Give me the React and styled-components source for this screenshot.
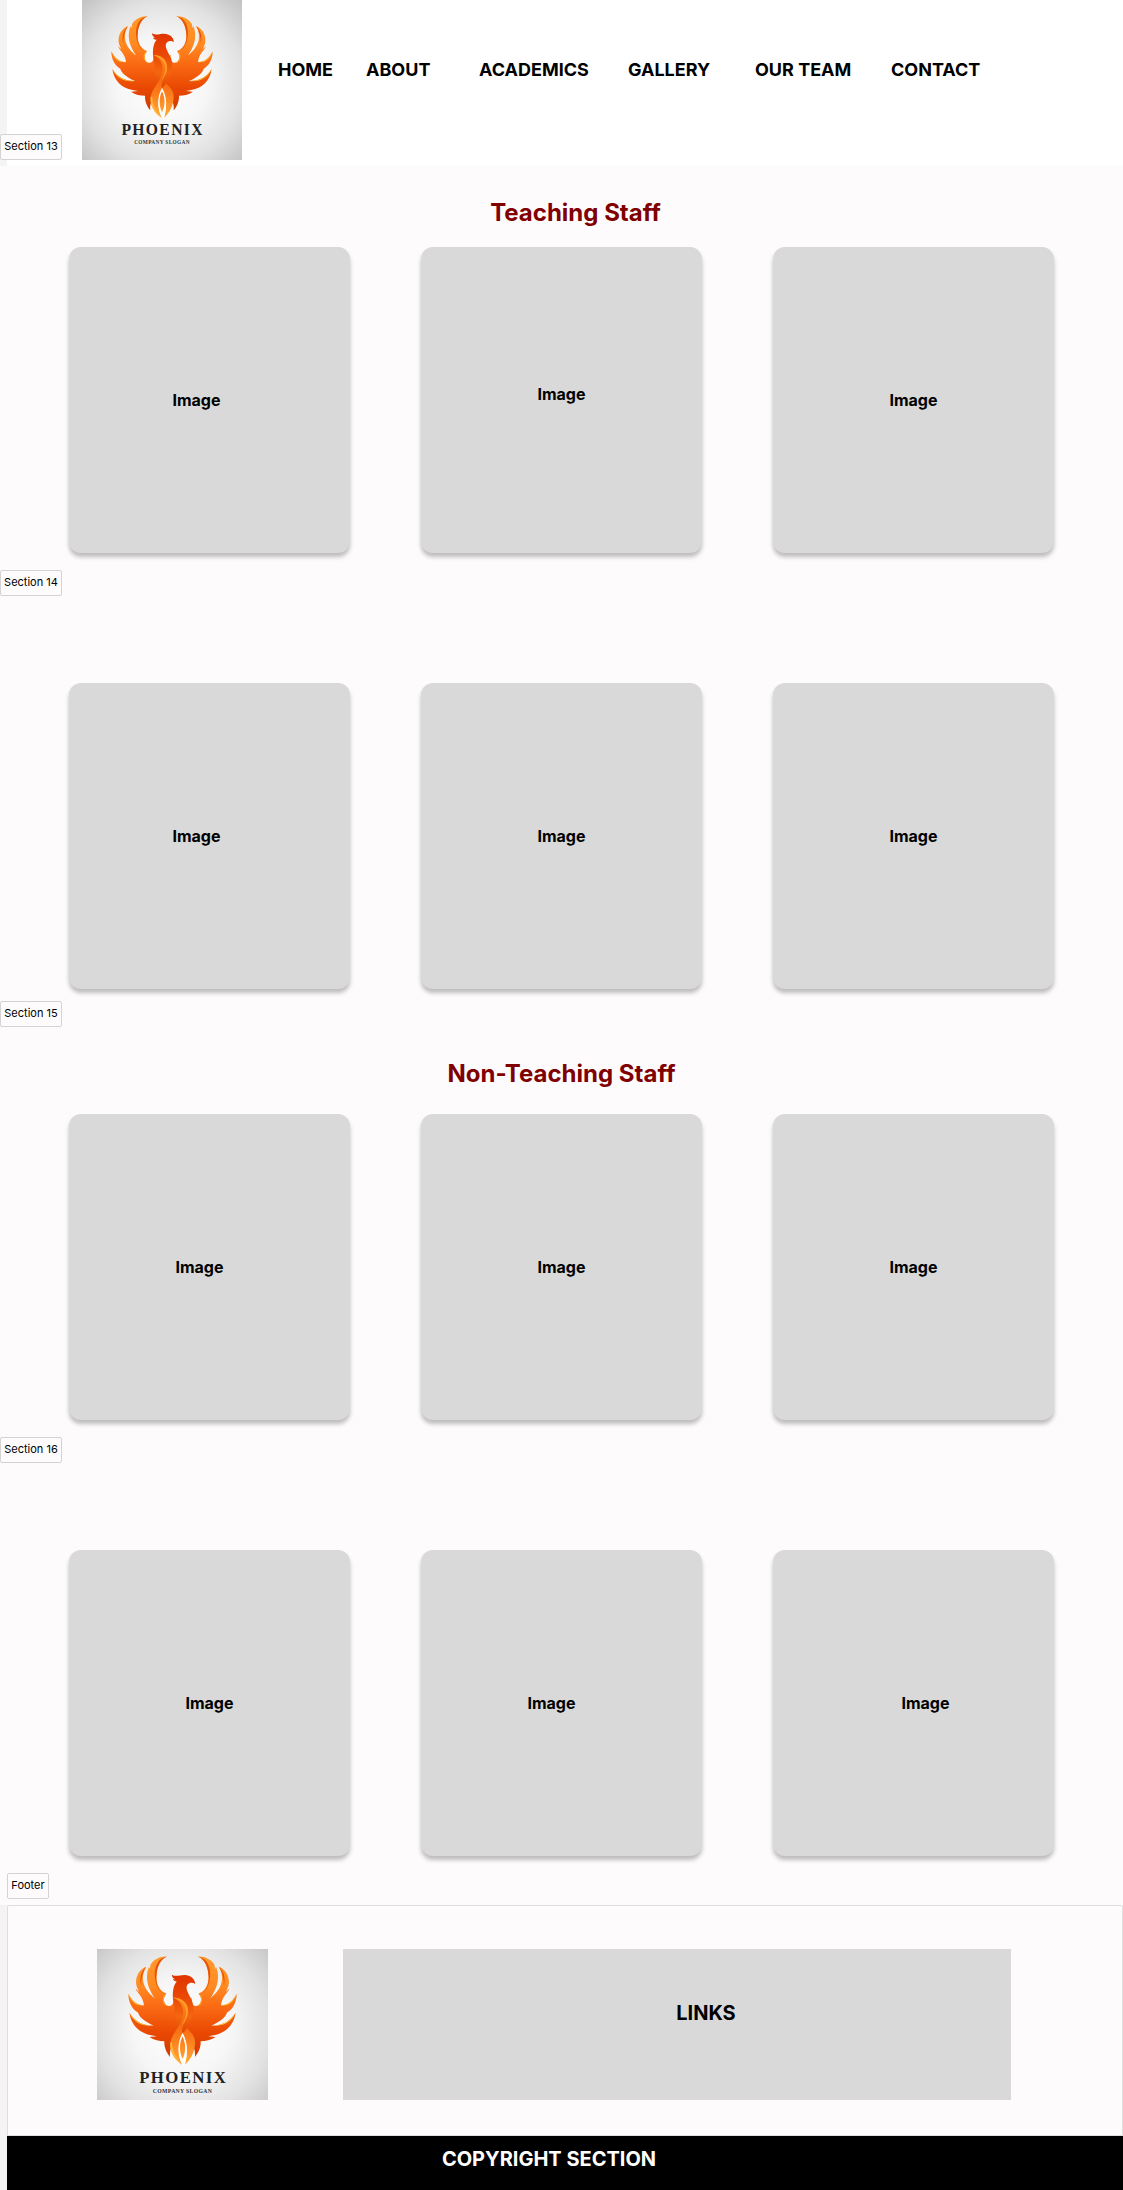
import React from "react";
import styled, { createGlobalStyle } from "styled-components";

const GlobalStyle = createGlobalStyle`
  *, *::before, *::after { box-sizing: border-box; }
  body {
    margin: 0;
    background: #f4f4f4;
    color: #000;
    font-family: Inter, "Liberation Sans", sans-serif;
  }
`;

const Header = styled.header`
  display: flex;
  align-items: flex-start;
  padding-bottom: 6px;
  background: linear-gradient(to right, #f4f4f4 7px, #fff 7px);
`;

const Tag = styled.span`
  display: block;
  flex: none;
  width: ${(p) => (p.$short ? "42px" : "62px")};
  height: 26px;
  margin-left: ${(p) => (p.$short ? "7px" : "0")};
  border: 1px solid #d4d2d3;
  border-radius: 2px;
  background: #fdfbfc;
  font-size: 11px;
  line-height: 22px;
  text-align: center;
  white-space: nowrap;
`;

const HeaderTag = styled(Tag)`
  align-self: flex-end;
  margin-right: 20px;
`;

const LogoSvg = styled.svg`
  display: block;
  flex: none;
  width: ${(p) => p.$width};
  height: ${(p) => p.$height};
`;

const Nav = styled.nav`
  display: grid;
  flex: 1;
  grid-template-columns: 88fr 113fr 149fr 127fr 136fr 232fr;
  margin: 58px 0 0 36px;
`;

const NavLink = styled.a`
  color: #000;
  font-size: 18px;
  font-weight: 700;
  line-height: 24px;
  text-decoration: none;
  white-space: nowrap;
`;

const Section = styled.section`
  display: flex;
  flex-direction: column;
  padding-bottom: 6px;
  background: #fdfbfc;
`;

const SectionHead = styled.div`
  height: 81px;
  padding-top: ${(p) => (p.$low ? "32px" : "26px")};
`;

const Title = styled.h2`
  margin: 0;
  padding-left: ${(p) => (p.$shifted ? "28px" : "0")};
  color: #800000;
  font-size: 24px;
  font-weight: 700;
  line-height: 30px;
  text-align: center;
`;

const Cards = styled.div`
  display: grid;
  grid-template-columns: repeat(3, 1fr);
  gap: 71px;
  padding: 0 69px;
  margin-bottom: ${(p) => (p.$tight ? "12px" : "17px")};
`;

const cardPadding = {
  center: "0",
  farLeft: "0 26px 0 0",
  left: "0 20px 0 0",
  right: "0 0 0 24px",
  top: "0 0 12px",
};

const Card = styled.div`
  display: flex;
  align-items: center;
  justify-content: center;
  height: 306px;
  padding: ${(p) => cardPadding[p.$place]};
  border-radius: 12px;
  background: #d9d9d9;
  box-shadow: 0 4px 4px rgba(0, 0, 0, 0.25);
  font-size: 16px;
  font-weight: 700;
  line-height: 20px;
`;

const Footer = styled.footer`
  padding-left: 7px;
`;

const FooterPanel = styled.div`
  display: flex;
  gap: 75px;
  padding: 43px 111px 35px 89px;
  border: 1px solid #e0dfe0;
  border-radius: 2px 2px 0 0;
  background: #fdfbfc;
`;

const Links = styled.div`
  display: flex;
  flex: 1;
  align-items: center;
  justify-content: center;
  padding: 0 0 24px 58px;
  background: #d9d9d9;
  font-size: 20px;
  font-weight: 700;
  line-height: 24px;
`;

const Copyright = styled.div`
  padding: 11px 32px 19px 0;
  background: #000;
  color: #fff;
  font-size: 20px;
  font-weight: 700;
  line-height: 24px;
  text-align: center;
`;

const WING =
  "M197 49 C176 48 158 58 150 73 L149 84 L146 78 C136 102 138 132 162 166 C138 148 116 116 138 78 C116 86 106 110 111 132 L118 148 L108 138 C113 153 129 160 132 186 C112 188 98 174 88 154 C88 184 104 207 130 212 L115 206 C119 222 140 234 159 243 C130 244 106 232 91 207 C95 240 118 264 152 270 L168 273 L147 275 C160 284 175 287 189 287 C188 305 196 320 205 331 C203 312 210 298 219 285 L242 262 L242 180 L214 164 C217 180 211 188 201 188 C189 187 185 170 190 161 L195 153 C176 147 165 126 167 103 C168 76 180 55 197 49 Z";

function Phoenix({ id, width, height }) {
  const ref = (name) => `url(#${id}-${name})`;
  return (
    <LogoSvg
      $width={width}
      $height={height}
      viewBox="0 0 480 480"
      preserveAspectRatio="xMidYMid slice"
      role="img"
      aria-label="Phoenix company logo"
    >
      <defs>
        <radialGradient id={`${id}-bg`} cx="0.5" cy="0.52" r="0.72">
          <stop offset="0" stopColor="#ffffff" />
          <stop offset="0.4" stopColor="#f6f6f6" />
          <stop offset="0.7" stopColor="#e2e2e2" />
          <stop offset="1" stopColor="#c2c2c2" />
        </radialGradient>
        <linearGradient id={`${id}-wing`} gradientUnits="userSpaceOnUse" x1="0" y1="49" x2="0" y2="325">
          <stop offset="0" stopColor="#ff9a2a" />
          <stop offset="0.3" stopColor="#ff8a22" />
          <stop offset="0.5" stopColor="#fb6c14" />
          <stop offset="0.78" stopColor="#e94803" />
          <stop offset="1" stopColor="#d23c00" />
        </linearGradient>
        <linearGradient id={`${id}-neck`} gradientUnits="userSpaceOnUse" x1="0" y1="100" x2="0" y2="268">
          <stop offset="0" stopColor="#e03400" />
          <stop offset="0.35" stopColor="#ea4604" />
          <stop offset="0.7" stopColor="#f4670f" />
          <stop offset="1" stopColor="#e04200" />
        </linearGradient>
        <linearGradient id={`${id}-tail`} gradientUnits="userSpaceOnUse" x1="0" y1="165" x2="0" y2="354">
          <stop offset="0" stopColor="#ff8a1c" />
          <stop offset="0.4" stopColor="#f56a12" />
          <stop offset="0.6" stopColor="#fb7b1a" />
          <stop offset="1" stopColor="#ffad38" />
        </linearGradient>
        <g id={`${id}-side`}>
          <path d={WING} fill={ref("wing")} />
          <path d="M197 49 C174 52 163 72 162 98 C162 122 172 144 184 152 C171 140 165 122 167 103 C168 76 180 55 197 49 Z" fill="#e85208" />
          <path d="M138 78 C123 92 119 110 124 130 C123 112 127 94 138 78 Z" fill="#e54a06" />
          <path d="M88 154 C98 174 112 186 132 186 C112 191 95 177 88 154 Z" fill="#ffb52e" />
          <path d="M91 207 C106 232 130 244 159 243 C128 247 102 234 91 207 Z" fill="#ffc22e" />
          <path d="M195 153 L190 161 C185 170 189 187 201 188 C187 191 181 172 187 160 Z" fill="#ffa52c" />
        </g>
      </defs>
      <rect width="480" height="480" fill={ref("bg")} />
      <use href={`#${id}-side`} />
      <use href={`#${id}-side`} transform="translate(480 0) scale(-1 1)" />
      <path
        d="M210 100 C221 107 230 101 246 101 C263 102 274 110 276 126 C267 121 260 122 254 128 C246 138 257 154 266 172 C276 196 272 224 240 264 L224 240 L213 166 C212 142 216 128 224 119 C219 119 215 117 213 113 L219 113 C213 110 210 105 210 100 Z"
        fill={ref("neck")}
      />
      <path
        d="M213 165 C246 164 262 190 253 217 C247 236 234 252 240 266 C230 286 222 320 240 354 C216 338 203 315 206 290 C211 262 241 240 242 206 C242 188 232 171 213 165 Z"
        fill={ref("tail")}
      />
      <path
        d="M213 165 C246 164 262 190 253 217 C249 228 244 236 239 243 C245 230 249 219 250 208 C251 188 238 171 213 165 Z"
        fill="#ff9d2b"
      />
      <path
        d="M240 264 C246 260 250 256 252 250 C262 262 276 270 275 292 C275 316 262 340 246 354 C256 322 252 288 240 264 Z"
        fill={ref("tail")}
      />
      <path
        d="M240 264 C225 290 225 326 240 354 L246 354 C255 324 256 290 240 264 Z"
        fill="#fff"
      />
      <path d="M240 274 C230 294 231 318 240 337 C250 318 250 294 240 274 Z" fill={ref("tail")} />
      <path
        d="M206 290 C203 315 216 338 240 354 C222 336 211 315 211 292 Z"
        fill="#ffb83c"
      />
      <text
        x="242"
        y="404"
        textAnchor="middle"
        fill="#222"
        fontFamily='"Liberation Serif", serif'
        fontSize="47"
        fontWeight="700"
        letterSpacing="4"
      >
        PHOENIX
      </text>
      <text
        x="240"
        y="431"
        textAnchor="middle"
        fill="#333"
        fontFamily='"Liberation Serif", serif'
        fontSize="16"
        fontWeight="700"
        letterSpacing="1"
      >
        COMPANY SLOGAN
      </text>
    </LogoSvg>
  );
}

const navItems = ["HOME", "ABOUT", "ACADEMICS", "GALLERY", "OUR TEAM", "CONTACT"];

const sections = [
  { title: "Teaching Staff", shifted: true, places: ["farLeft", "top", "center"], next: "Section 14" },
  { places: ["farLeft", "center", "center"], next: "Section 15", tight: true },
  { title: "Non-Teaching Staff", places: ["left", "center", "center"], next: "Section 16" },
  { places: ["center", "left", "right"], next: "Footer" },
];

export default function App() {
  return (
    <>
      <GlobalStyle />
      <Header>
        <HeaderTag>Section 13</HeaderTag>
        <Phoenix id="header-logo" width="160px" height="160px" />
        <Nav>
          {navItems.map((item) => (
            <NavLink key={item} href="#">
              {item}
            </NavLink>
          ))}
        </Nav>
      </Header>
      <main>
        {sections.map((section) => (
          <Section key={section.next}>
            <SectionHead $low={section.shifted}>
              {section.title && <Title $shifted={section.shifted}>{section.title}</Title>}
            </SectionHead>
            <Cards $tight={section.tight}>
              {section.places.map((place, i) => (
                <Card key={i} $place={place}>
                  Image
                </Card>
              ))}
            </Cards>
            <Tag $short={section.next === "Footer"}>{section.next}</Tag>
          </Section>
        ))}
      </main>
      <Footer>
        <FooterPanel>
          <Phoenix id="footer-logo" width="171px" height="151px" />
          <Links>LINKS</Links>
        </FooterPanel>
        <Copyright>COPYRIGHT SECTION</Copyright>
      </Footer>
    </>
  );
}
